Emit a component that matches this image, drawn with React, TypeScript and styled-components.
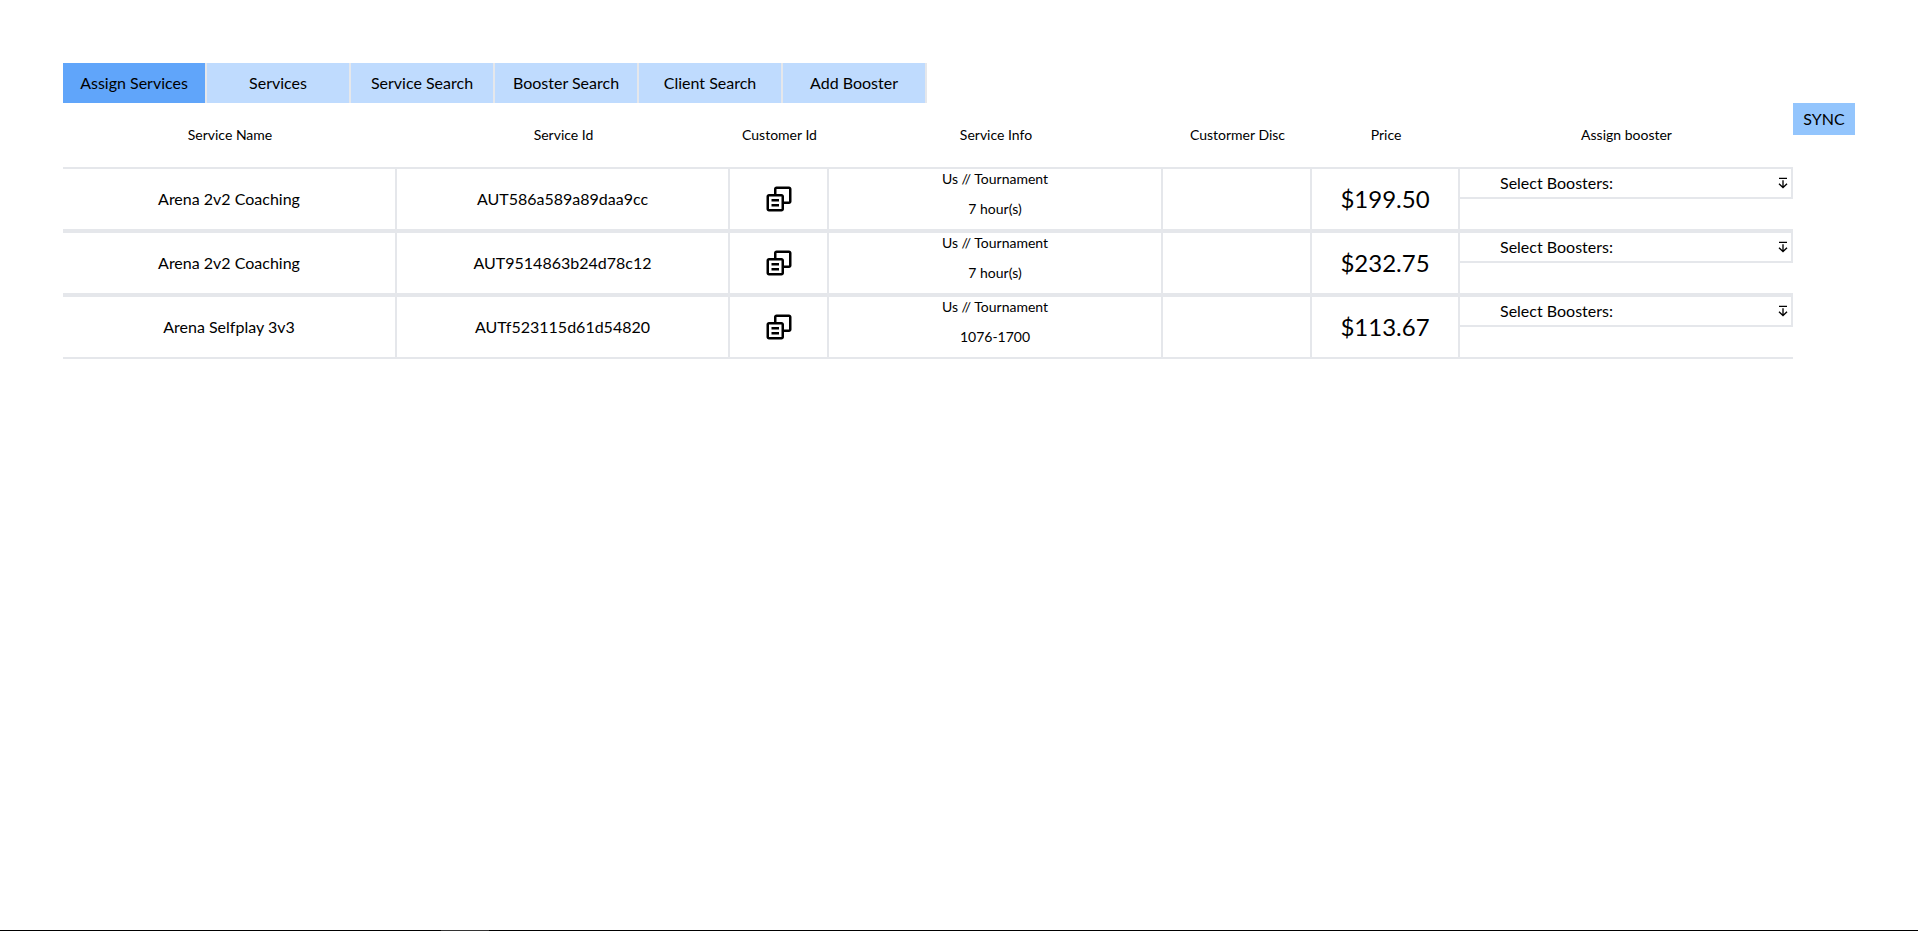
import React from "react";
import styled, { createGlobalStyle } from "styled-components";
import { BiArrowFromTop, BiCopyAlt } from "react-icons/bi";

const GlobalStyle = createGlobalStyle`
  *, *::before, *::after { box-sizing: border-box; }
  body {
    margin: 0;
    background: #fff;
    color: #000;
    font-family: Lato, "Liberation Sans", sans-serif;
    font-size: 16px;
    line-height: 24px;
  }
  button { font: inherit; color: inherit; border: 0; margin: 0; cursor: pointer; }
`;

const LINE = "#e5e7eb";
const COLUMNS = "334px 333px 99px 334px 149px 148px 333px";

const Page = styled.div`
  height: 100vh;
  display: flex;
  flex-direction: column;
  justify-content: space-between;
`;

const Main = styled.main`
  padding: 63px 63px 0;
`;

const Tabs = styled.nav`
  display: flex;
`;

const Tab = styled.button<{ $active?: boolean }>`
  width: 144px;
  height: 40px;
  padding: 0;
  text-align: center;
  background: ${(p) => (p.$active ? "#60a5fa" : "#bfdbfe")};
  border-right: 2px solid ${LINE};
`;

const Content = styled.div`
  display: flex;
  align-items: flex-start;
`;

const Table = styled.section`
  width: 1730px;
`;

const HeaderRow = styled.div`
  display: grid;
  grid-template-columns: ${COLUMNS};
  align-items: center;
  height: 64px;
  font-size: 14px;
  line-height: 20px;
  text-align: center;
`;

const Row = styled.div`
  display: grid;
  grid-template-columns: ${COLUMNS};
  height: 64px;
  border-top: 2px solid ${LINE};
  border-bottom: 2px solid ${LINE};
`;

const Cell = styled.div`
  display: flex;
  align-items: center;
  justify-content: center;
  border-right: 2px solid ${LINE};
`;

const InfoCell = styled(Cell)`
  flex-direction: column;
  justify-content: flex-start;
  gap: 10px;
  font-size: 14px;
  line-height: 20px;
`;

const PriceCell = styled(Cell)`
  font-size: 24px;
  line-height: 32px;
`;

const Select = styled.div`
  display: flex;
  align-items: center;
  justify-content: space-between;
  height: 30px;
  padding: 0 0 0 40px;
  border-right: 2px solid ${LINE};
  border-bottom: 2px solid ${LINE};
`;

const SelectArrow = styled(BiArrowFromTop)`
  width: 16px;
  height: 16px;
`;

const SyncButton = styled.button`
  width: 62px;
  height: 32px;
  padding: 0;
  background: #93c5fd;
`;

const BottomBar = styled.footer`
  display: flex;
  height: 1px;
  padding-left: 441px;
  background: #000;
`;

const BarSegment = styled.div`
  width: 48px;
  background: #333;
`;

const tabs = ["Assign Services", "Services", "Service Search", "Booster Search", "Client Search", "Add Booster"];
const headers = ["Service Name", "Service Id", "Customer Id", "Service Info", "Custormer Disc", "Price", "Assign booster"];
const services = [
  { name: "Arena 2v2 Coaching", id: "AUT586a589a89daa9cc", region: "Us // Tournament", detail: "7 hour(s)", price: "$199.50" },
  { name: "Arena 2v2 Coaching", id: "AUT9514863b24d78c12", region: "Us // Tournament", detail: "7 hour(s)", price: "$232.75" },
  { name: "Arena Selfplay 3v3", id: "AUTf523115d61d54820", region: "Us // Tournament", detail: "1076-1700", price: "$113.67" },
];

export default function App() {
  return (
    <Page>
      <GlobalStyle />
      <Main>
        <Tabs>
          {tabs.map((label, i) => (
            <Tab key={label} $active={i === 0}>{label}</Tab>
          ))}
        </Tabs>
        <Content>
          <Table>
            <HeaderRow>
              {headers.map((label) => (
                <span key={label}>{label}</span>
              ))}
            </HeaderRow>
            {services.map((s) => (
              <Row key={s.id}>
                <Cell>{s.name}</Cell>
                <Cell>{s.id}</Cell>
                <Cell><BiCopyAlt size={30} /></Cell>
                <InfoCell>
                  <span>{s.region}</span>
                  <span>{s.detail}</span>
                </InfoCell>
                <Cell />
                <PriceCell>{s.price}</PriceCell>
                <Select>
                  <span>Select Boosters:</span>
                  <SelectArrow />
                </Select>
              </Row>
            ))}
          </Table>
          <SyncButton>SYNC</SyncButton>
        </Content>
      </Main>
      <BottomBar>
        <BarSegment />
      </BottomBar>
    </Page>
  );
}
